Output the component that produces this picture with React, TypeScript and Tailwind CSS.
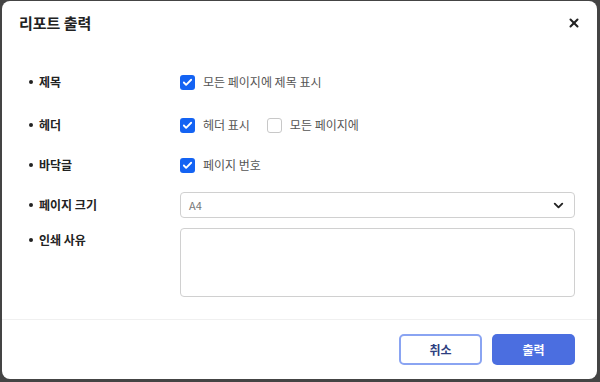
import { ChevronDown, X, Check } from 'lucide-react'

const font = { fontFamily: '"Noto Sans CJK KR", "Noto Sans", sans-serif' }

function Box({ checked }: { checked: boolean }) {
  return checked ? (
    <span className="flex h-[15px] w-[15px] items-center justify-center rounded-[3px] bg-[#1463f3]">
      <Check className="h-[11px] w-[11px] text-white" strokeWidth={4} />
    </span>
  ) : (
    <span className="h-[15px] w-[15px] rounded-[3px] border border-[#c8c8c8] bg-white" />
  )
}

function Row({ label, children, className = '' }: { label: string; children?: React.ReactNode; className?: string }) {
  return (
    <div className={`flex ${className}`}>
      <div className="flex w-[178px] shrink-0 items-center gap-[6px] pl-[27px] text-[12px] font-bold text-[#222]">
        <span className="h-[4px] w-[4px] rounded-full bg-[#222]" />
        {label}
      </div>
      <div className="flex flex-1 items-center">{children}</div>
    </div>
  )
}

export default function App() {
  return (
    <div className="h-[382px] w-[600px] bg-[#444] pb-[3px] pl-[2px] pr-[3px] pt-px" style={font}>
      <div className="flex h-full flex-col rounded-[8px] bg-white">
        <div className="flex h-[44px] items-center justify-between pl-[17px] pr-[16px]">
          <h1 className="text-[15px] font-bold text-[#222]">리포트 출력</h1>
          <X className="h-[14px] w-[14px] text-[#222]" strokeWidth={3.5} />
        </div>

        <div className="flex flex-col pr-[22px] pt-[18px]">
          <Row label="제목" className="h-[38px]">
            <label className="flex items-center gap-[8px] text-[12px] text-[#555]">
              <Box checked />
              모든 페이지에 제목 표시
            </label>
          </Row>
          <Row label="헤더" className="mt-[5px] h-[38px]">
            <label className="flex items-center gap-[8px] text-[12px] text-[#555]">
              <Box checked />
              헤더 표시
            </label>
            <label className="ml-[17px] flex items-center gap-[8px] text-[12px] text-[#555]">
              <Box checked={false} />
              모든 페이지에
            </label>
          </Row>
          <Row label="바닥글" className="mt-[2px] h-[38px]">
            <label className="flex items-center gap-[8px] text-[12px] text-[#555]">
              <Box checked />
              페이지 번호
            </label>
          </Row>
          <Row label="페이지 크기" className="mt-[8px] h-[26px]">
            <div className="flex h-[26px] flex-1 items-center justify-between rounded-[4px] border border-[#d0d0d0] pl-[8px] pr-[8px] text-[11px] text-[#777]">
              A4
              <ChevronDown className="h-[15px] w-[15px] text-[#222]" strokeWidth={3} />
            </div>
          </Row>
          <div className="mt-[10px] flex">
            <div className="flex h-[24px] w-[178px] shrink-0 items-center gap-[6px] pl-[27px] text-[12px] font-bold text-[#222]">
              <span className="h-[4px] w-[4px] rounded-full bg-[#222]" />
              인쇄 사유
            </div>
            <textarea className="h-[69px] flex-1 resize-none rounded-[4px] border border-[#d0d0d0] outline-none" />
          </div>
        </div>

        <div className="mt-auto border-t border-[#f0f0f0] px-[22px] pb-[14px] pt-[14px]">
          <div className="flex justify-end gap-[10px]">
            <button className="h-[31px] w-[83px] rounded-[5px] border-2 border-[#8aa4f2] bg-white text-[12px] font-bold text-[#2d3e80]">
              취소
            </button>
            <button className="h-[31px] w-[83px] rounded-[5px] bg-[#4b6ee0] text-[12px] font-bold text-white">
              출력
            </button>
          </div>
        </div>
      </div>
    </div>
  )
}
